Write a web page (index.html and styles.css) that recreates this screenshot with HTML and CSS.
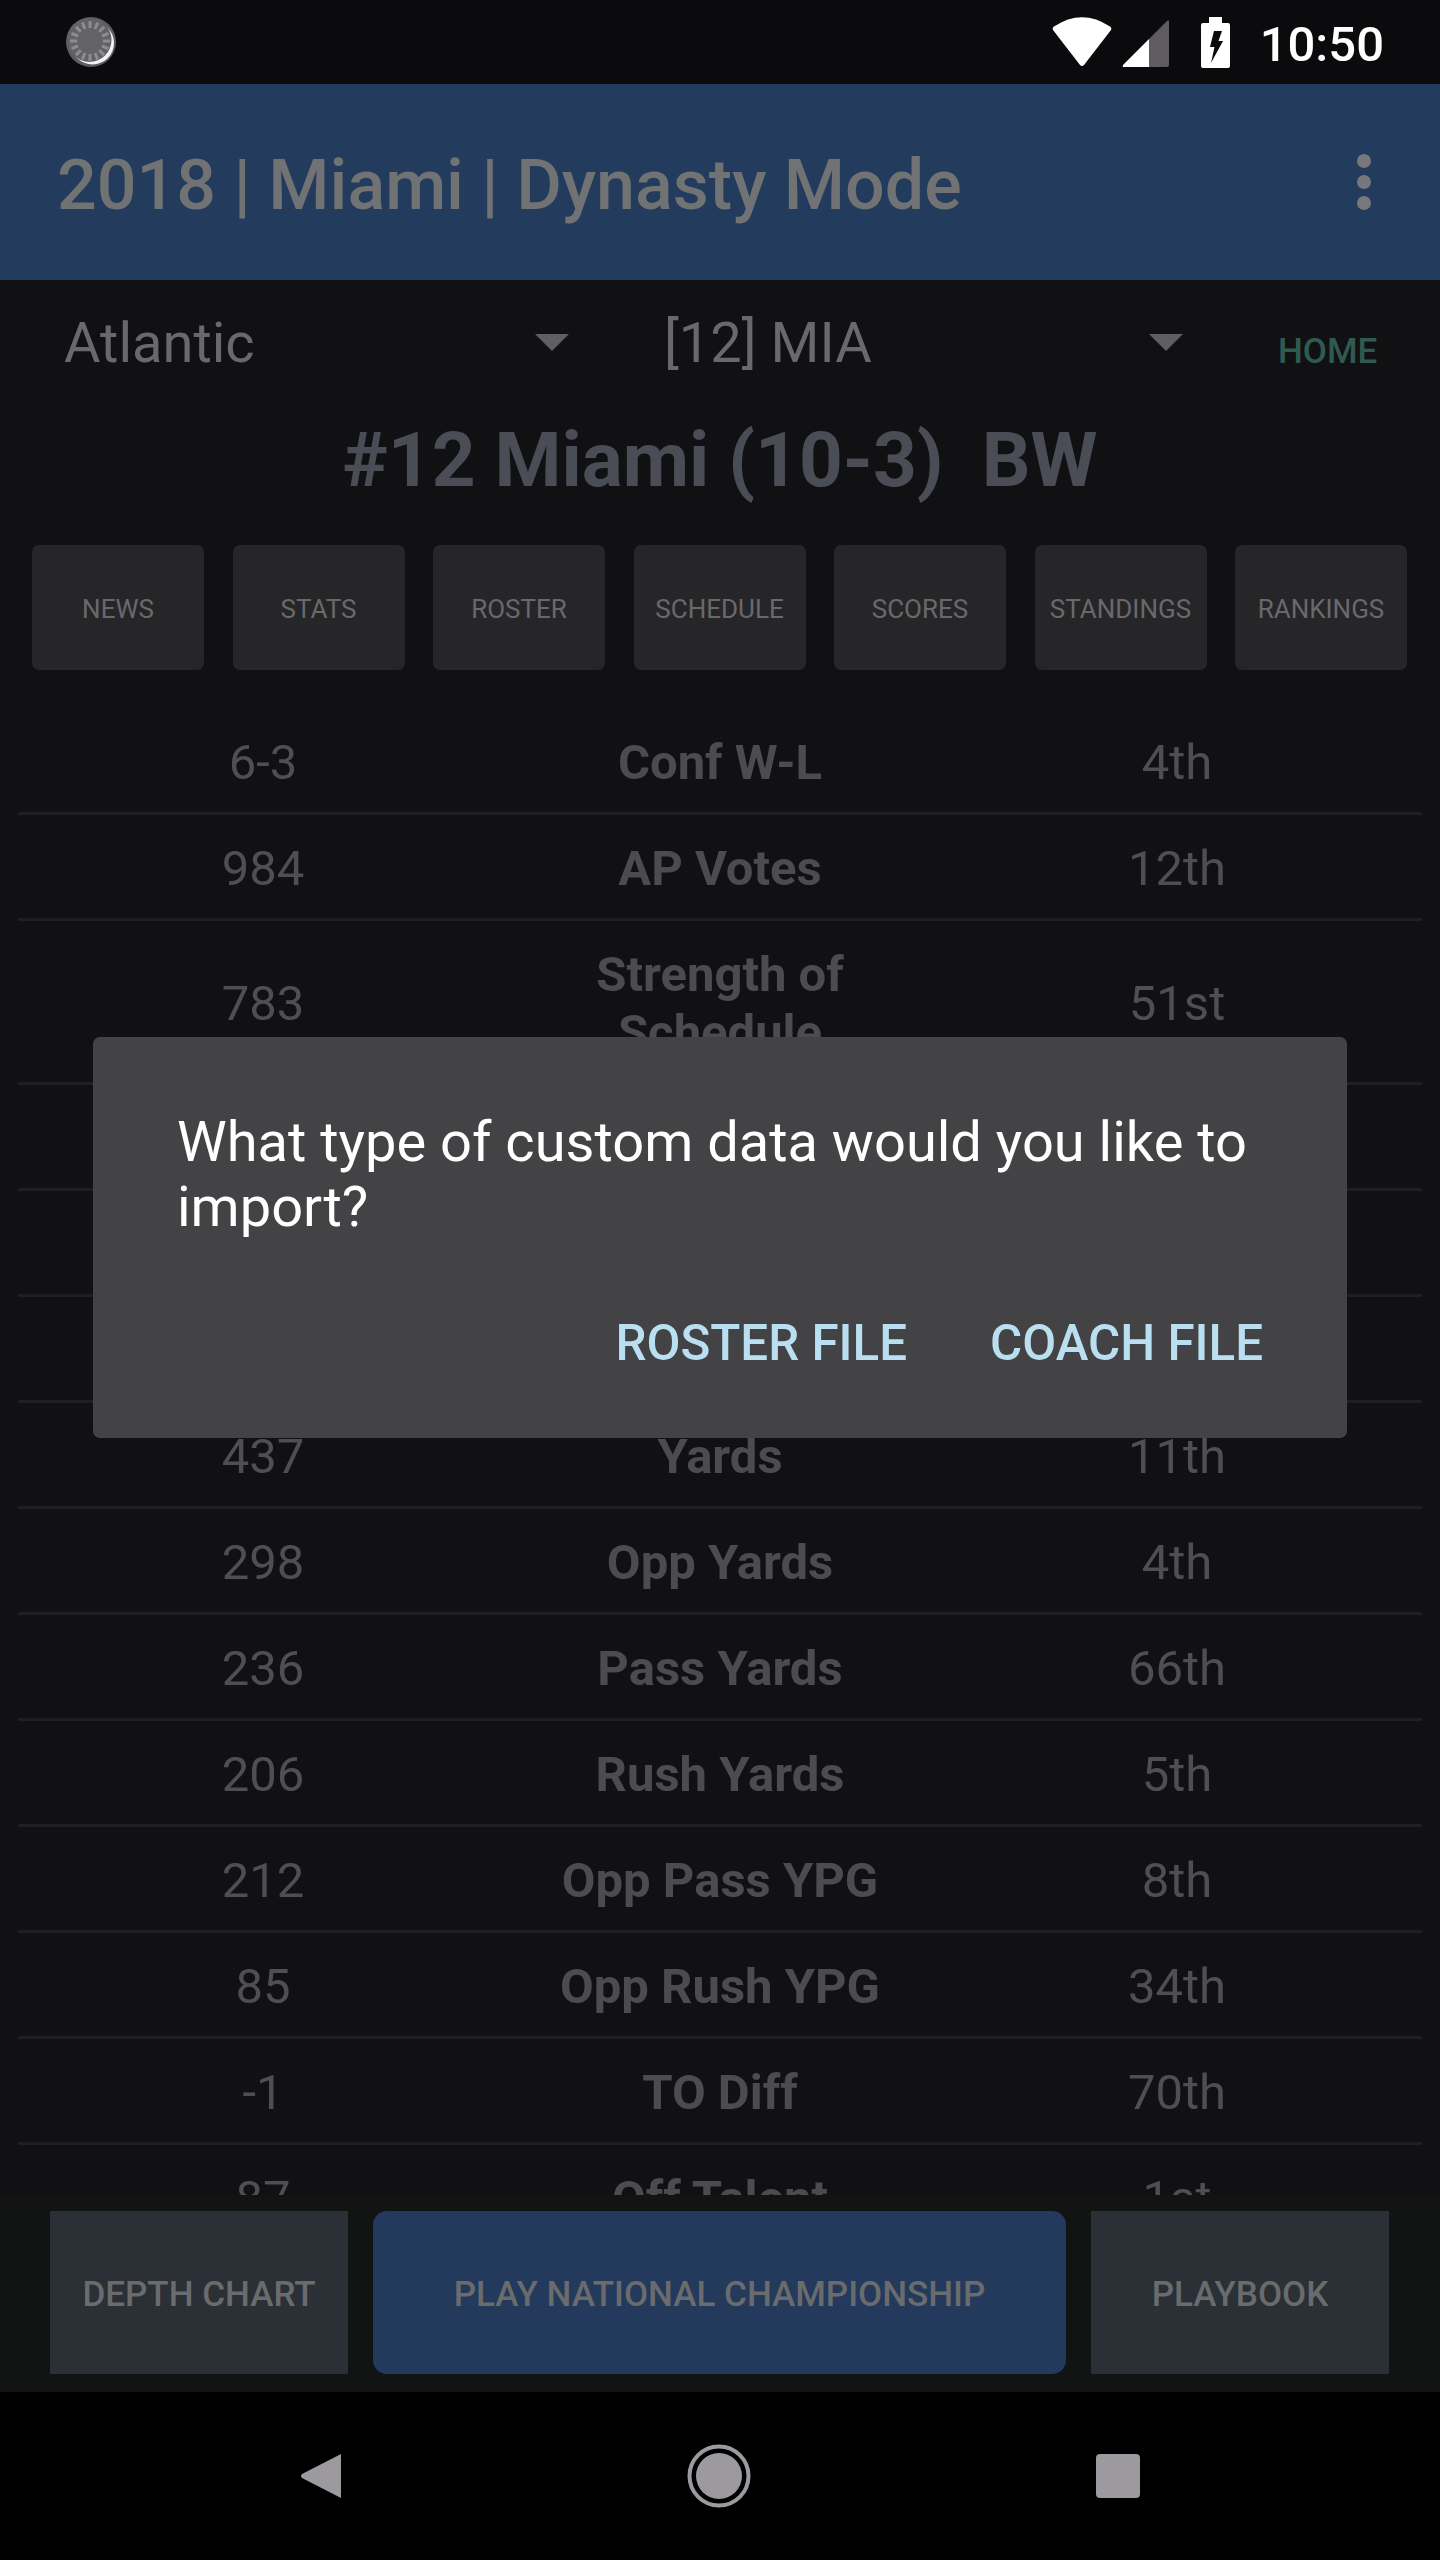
FILE: index.html
```html
<!DOCTYPE html>
<html lang="en">
<head>
<meta charset="utf-8">
<title>Dynasty Mode</title>
<link rel="stylesheet" href="styles.css">
</head>
<body>
<div class="screen">
  <header class="status">
    <svg class="sync" width="50" height="50" viewBox="0 0 50 50">
      <circle cx="25" cy="25" r="25" fill="#5d5d61"/>
      <circle cx="26.500" cy="26" r="21.500" fill="#f4f4f4"/>
      <circle cx="23.500" cy="23" r="22" fill="#636367"/>
      <g stroke="#8d8d90" stroke-width="3">
        <path d="M24 4L24 11M24 37L24 44M4 24L11 24M37 24L44 24M38.100 9.900L33.200 14.800M14.800 33.200L9.900 38.100M9.900 9.900L14.800 14.800M33.200 33.200L38.100 38.100M31.700 5.500L29 12M19 36L16.300 42.500M16.300 5.500L19 12M29 36L31.700 42.500M5.500 16.300L12 19M36 29L42.500 31.700M42.500 16.300L36 19M12 29L5.500 31.700"/>
      </g>
    </svg>
    <div class="status-right">
      <svg class="wifi" width="60" height="50" viewBox="0 0 60 50"><path d="M1 13Q0 11 2 9.500Q30-9 58 9.500Q60 11 59 13L32 48Q30 50 28 48Z" fill="#fff"/></svg>
      <svg class="signal" width="47" height="47" viewBox="0 0 47 47"><path d="M27 19L27 47H2Q0 47 1 45Z" fill="#fff"/><path d="M27 19L45 1Q47-1 47 2V45Q47 47 45 47H27Z" fill="#5e5c60"/></svg>
      <svg class="battery" width="29" height="51" viewBox="0 0 29 51"><path d="M8 0H21V6H27Q29 6 29 8V49Q29 51 27 51H2Q0 51 0 49V8Q0 6 2 6H8Z" fill="#fff"/><path d="M13 14H21L17.500 24H22L10 46L13.500 30H9Z" fill="#0b0b0e"/></svg>
      <span class="clock">10:50</span>
    </div>
  </header>

  <div class="toolbar">
    <h1 class="toolbar-title">2018 | Miami | Dynasty Mode</h1>
    <div class="overflow"><i></i><i></i><i></i></div>
  </div>

  <div class="pickers">
    <div class="picker picker-conf"><span>Atlantic</span><b class="caret"></b></div>
    <div class="picker picker-team"><span>[12] MIA</span><b class="caret"></b></div>
    <div class="home">HOME</div>
  </div>

  <h2 class="team">#12 Miami (10-3)&nbsp; BW</h2>

  <nav class="tabs">
    <div class="tab">NEWS</div>
    <div class="tab">STATS</div>
    <div class="tab">ROSTER</div>
    <div class="tab">SCHEDULE</div>
    <div class="tab">SCORES</div>
    <div class="tab">STANDINGS</div>
    <div class="tab">RANKINGS</div>
  </nav>

  <main class="stats">
    <div class="row"><span>6-3</span><strong>Conf W-L</strong><span>4th</span></div>
    <div class="row"><span>984</span><strong>AP Votes</strong><span>12th</span></div>
    <div class="row"><span>783</span><strong>Strength of Schedule</strong><span>51st</span></div>
    <div class="row"></div>
    <div class="row"></div>
    <div class="row"></div>
    <div class="row"><span>437</span><strong>Yards</strong><span>11th</span></div>
    <div class="row"><span>298</span><strong>Opp Yards</strong><span>4th</span></div>
    <div class="row"><span>236</span><strong>Pass Yards</strong><span>66th</span></div>
    <div class="row"><span>206</span><strong>Rush Yards</strong><span>5th</span></div>
    <div class="row"><span>212</span><strong>Opp Pass YPG</strong><span>8th</span></div>
    <div class="row"><span>85</span><strong>Opp Rush YPG</strong><span>34th</span></div>
    <div class="row"><span>-1</span><strong>TO Diff</strong><span>70th</span></div>
    <div class="row"><span>87</span><strong>Off Talent</strong><span>1st</span></div>
  </main>

  <div class="actions">
    <div class="action action-side">DEPTH CHART</div>
    <div class="action action-main">PLAY NATIONAL CHAMPIONSHIP</div>
    <div class="action action-side">PLAYBOOK</div>
  </div>

  <footer class="navbar">
    <svg width="40" height="46" viewBox="0 0 40 46"><path d="M40 1V45L1 25Q-1 23 1 21Z" fill="#9c9a9e"/></svg>
    <svg width="64" height="64" viewBox="0 0 64 64"><circle cx="32" cy="32" r="29.500" fill="none" stroke="#9c9a9e" stroke-width="4"/><circle cx="32" cy="32" r="23" fill="#9c9a9e"/></svg>
    <div class="nav-square"></div>
  </footer>

  <div class="dialog-layer">
    <div class="dialog">
      <p class="dialog-text">What type of custom data would you like to import?</p>
      <div class="dialog-actions">
        <span class="dialog-btn">ROSTER FILE</span>
        <span class="dialog-btn">COACH FILE</span>
      </div>
    </div>
  </div>
</div>
</body>
</html>
```

FILE: styles.css
```css
* { box-sizing: border-box; }
html, body { margin: 0; padding: 0; background: #000; }
body { font-family: Roboto, "Noto Sans", sans-serif; }

.screen {
  position: relative;
  width: 1440px;
  height: 2560px;
  display: flex;
  flex-direction: column;
  background: #111114;
  overflow: hidden;
}

/* status bar */
.status {
  height: 84px;
  flex: none;
  background: #0b0b0e;
  display: flex;
  align-items: center;
  justify-content: space-between;
  padding: 0 56px 0 66px;
}
.status-right { display: flex; align-items: center; }
.signal { margin-left: 10px; margin-top: 3px; }
.battery { margin-left: 32px; margin-top: 1px; }
.clock { margin-left: 30px; margin-top: 6px; color: #fff; font-size: 49px; font-weight: 500; line-height: 60px; }

/* toolbar */
.toolbar {
  height: 196px;
  flex: none;
  background: #233b5c;
  display: flex;
  align-items: center;
  justify-content: space-between;
  padding: 0 69px 0 57px;
}
.toolbar-title { margin: 6px 0 0; color: #707274; font-size: 70px; font-weight: 500; }
.overflow { display: flex; flex-direction: column; gap: 7px; }
.overflow i { display: block; width: 14px; height: 14px; border-radius: 50%; background: #77787b; }

/* pickers */
.pickers { height: 125px; flex: none; display: flex; align-items: center; }
.picker { display: flex; align-items: center; justify-content: space-between; color: #69696c; font-size: 56px; }
.picker-conf { width: 505px; margin-left: 64px; }
.picker-team { width: 519px; margin-left: 95px; }
.caret { width: 0; height: 0; border-left: 17px solid transparent; border-right: 17px solid transparent; border-top: 17px solid #5f5f62; }
.home { margin-left: 95px; margin-top: 18px; color: #2f5a52; font-size: 35px; font-weight: 500; }

.team { margin: 0; height: 106px; flex: none; padding-top: 2px; text-align: center; line-height: 106px; color: #4a4d55; font-size: 76.500px; font-weight: 700; }

/* tabs */
.tabs { flex: none; margin: 34px 33px 0 32px; display: flex; justify-content: space-between; }
.tab {
  width: 172px;
  height: 125px;
  padding-top: 2px;
  border-radius: 7px;
  background: #262628;
  color: #69696c;
  font-size: 26px;
  display: flex;
  align-items: center;
  justify-content: center;
}

/* stats table */
.stats { flex: 1; min-height: 0; margin: 39px 18px 0; overflow: hidden; }
.row {
  display: grid;
  grid-template-columns: 490px 424px 490px;
  align-items: center;
  min-height: 106px;
  padding: 25px 0 20px;
  border-bottom: 3px solid #1f1f22;
  text-align: center;
  font-size: 49px;
  line-height: 58px;
  color: #4f4f52;
}
.row strong { font-weight: 700; color: #4c4c4f; padding: 0 20px; }

/* bottom actions */
.actions {
  height: 197px;
  flex: none;
  background: #121413;
  padding: 16px 51px 18px 50px;
  display: grid;
  grid-template-columns: 298px 1fr 298px;
  gap: 25px;
}
.action { display: flex; align-items: center; justify-content: center; padding-top: 3px; color: #6a6b6d; font-size: 35px; font-weight: 500; }
.action-side { background: #2a3036; }
.action-main { background: #243a5c; border-radius: 14px; }

/* system nav */
.navbar {
  position: relative;
  height: 168px;
  flex: none;
  background: #000;
  display: flex;
  align-items: center;
  padding: 0 300px 0 301px;
  justify-content: space-between;
}
.nav-square { width: 44px; height: 44px; border-radius: 4px; background: #9c9a9e; }

/* dialog */
.dialog-layer {
  position: absolute;
  top: 84px;
  left: 0;
  right: 0;
  bottom: 168px;
  padding-bottom: 1px;
  display: flex;
  align-items: center;
  justify-content: center;
}
.dialog {
  width: 1254px;
  height: 401px;
  border-radius: 7px;
  background: #434345;
  padding: 73px 84px 0;
}
.dialog-text { margin: 0; color: #fff; font-size: 56px; line-height: 65px; }
.dialog-actions { display: flex; justify-content: flex-end; gap: 83px; margin-top: 74px; }
.dialog-btn { color: #b9dff0; font-size: 49.300px; font-weight: 500; }
```
